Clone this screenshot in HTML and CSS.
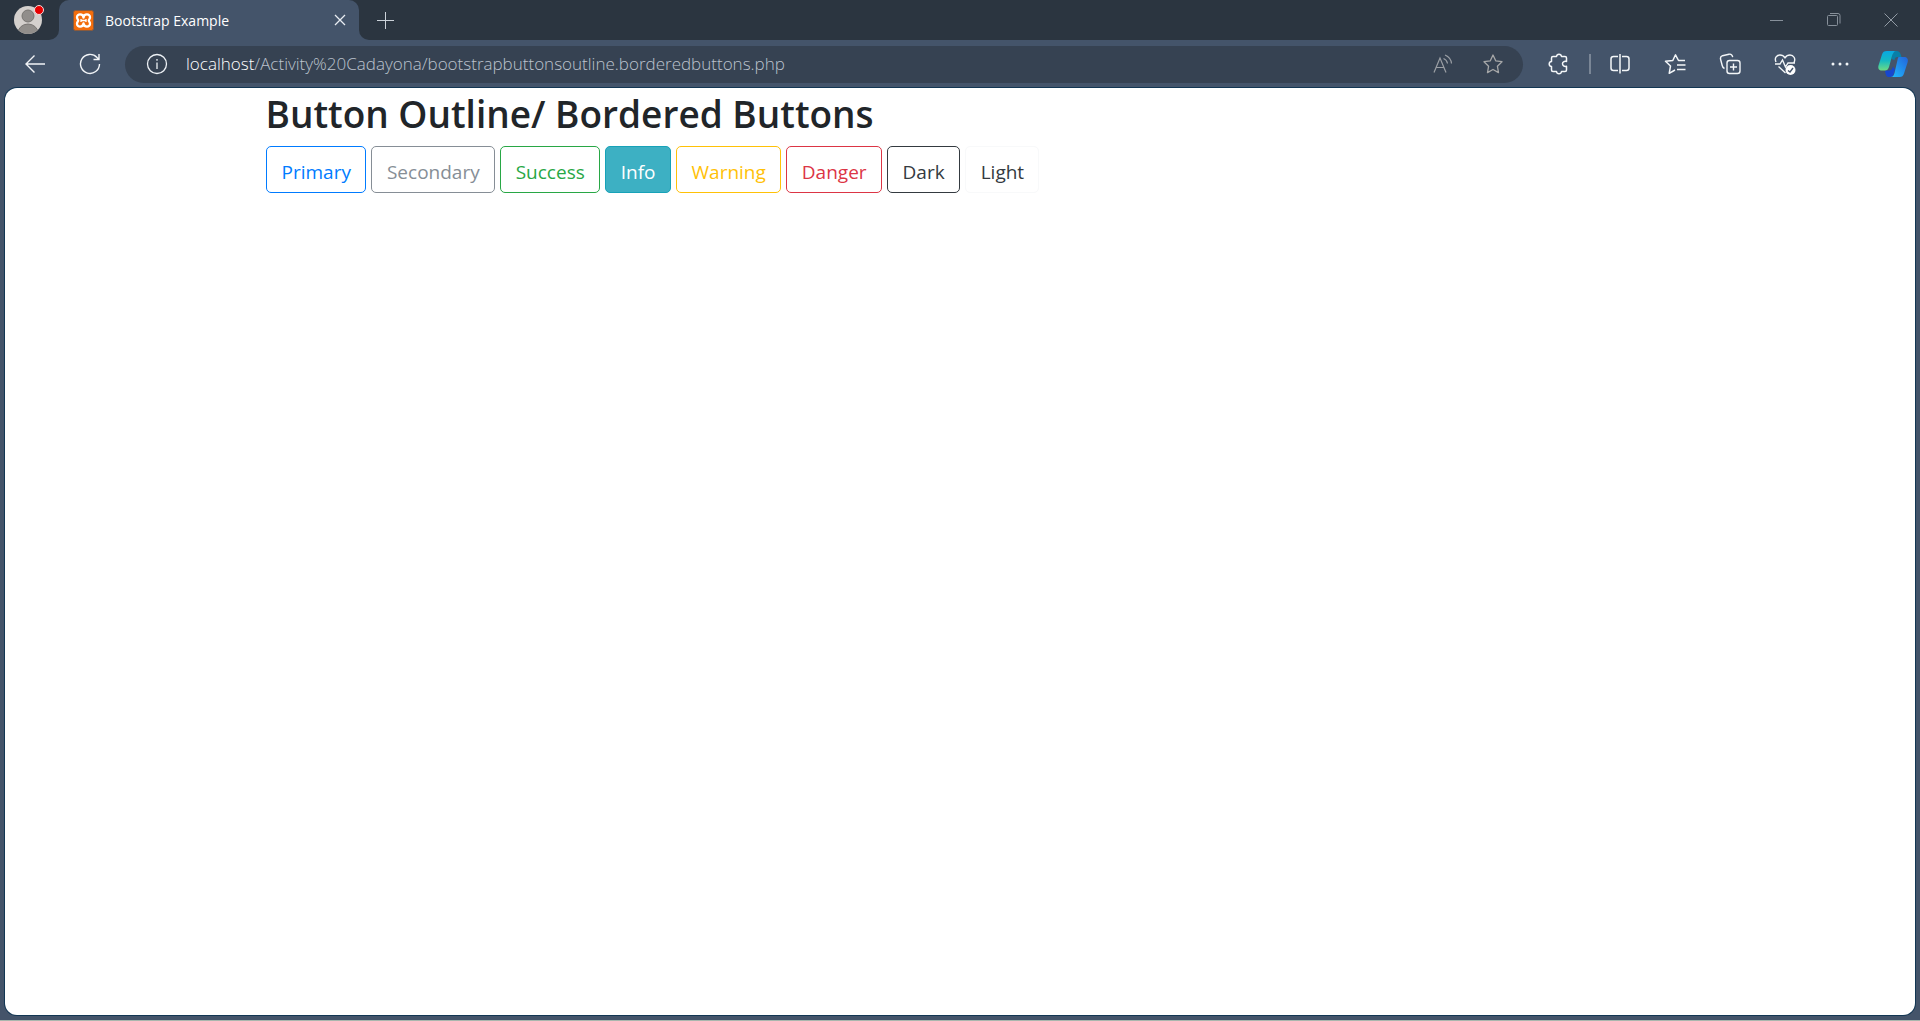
FILE: index.html
```html
<!DOCTYPE html>
<html lang="en">
<head>
<meta charset="utf-8">
<title>Bootstrap Example</title>
<link rel="stylesheet" href="styles.css">
</head>
<body>
<div class="browser">
  <header class="tabs">
    <button class="profile" aria-label="Profile">
      <svg width="32" height="32" viewBox="0 0 32 32"><defs><clipPath id="face"><circle cx="16" cy="18" r="14"/></clipPath></defs><circle cx="16" cy="18" r="14" fill="#d4d0cd"/><g clip-path="url(#face)" fill="#918e8b" stroke="#777471"><circle cx="16" cy="14" r="6"/><ellipse cx="16" cy="31" rx="10" ry="9"/></g><circle cx="27" cy="8" r="4.5" fill="#e60000" stroke="#f5dddd"/></svg>
    </button>
    <div class="tab">
      <svg class="favicon" width="21" height="21" viewBox="0 0 21 21"><rect x=".5" y=".5" width="20" height="20" rx="2" fill="#f36d0c" stroke="#8a5a3c"/><path d="M10.500 7.500C10 3.500 4 3.500 4 7.300c0 1.700 1.200 2.200 1.200 3.200S4 12 4 13.700c0 3.800 6 3.800 6.500-.2.500 4 6.500 4 6.500.2 0-1.700-1.200-2.200-1.200-3.200S17 9 17 7.300c0-3.800-6-3.800-6.500.2z" fill="none" stroke="#fff" stroke-width="2.300" stroke-linejoin="round"/><path d="M8 9v3M13 9v3M8 10.500h5" stroke="#fff" stroke-width="1.300"/></svg>
      <span class="tab-title">Bootstrap Example</span>
      <button class="tab-close" aria-label="Close tab"><svg width="12" height="12" viewBox="0 0 12 12"><path d="M1 1l10 10M11 1L1 11" stroke="#e8edf2" stroke-width="1.300"/></svg></button>
    </div>
    <div class="strip">
      <button aria-label="New tab"><svg width="18" height="18" viewBox="0 0 18 18"><path d="M9.500 1v17M1 9.500h17" stroke="#cbd2d9"/></svg></button>
      <div class="window-controls">
        <button aria-label="Minimize"><svg width="14" height="14" viewBox="0 0 14 14"><path d="M0 7.500h13" stroke="#87909a"/></svg></button>
        <button aria-label="Restore"><svg width="14" height="14" viewBox="0 0 14 14" fill="none" stroke="#87909a"><rect x=".5" y="2.500" width="10" height="10" rx="1"/><path d="M3 .5h8a2 2 0 0 1 2 2v8"/></svg></button>
        <button aria-label="Close"><svg width="14" height="14" viewBox="0 0 14 14"><path d="M.5.5l13 13M13.500.5l-13 13" stroke="#929ba5"/></svg></button>
      </div>
    </div>
  </header>
  <nav class="toolbar">
    <button class="back" aria-label="Back"><svg width="22" height="20" viewBox="0 0 22 20" fill="none" stroke="#f1f4f7" stroke-width="1.400"><path d="M10.500 1.500L2 10l8.500 8.500M2 10h19"/></svg></button>
    <button class="reload" aria-label="Refresh"><svg width="22" height="22" viewBox="0 0 22 22" fill="none" stroke="#f1f4f7" stroke-width="1.400"><path d="M20.500 11A9.500 9.500 0 1 1 18 4.500L20 6.500M20 1v5.500h-5.500"/></svg></button>
    <div class="address">
      <svg width="22" height="22" viewBox="0 0 22 22" fill="none" stroke="#edf1f5" stroke-width="1.300"><circle cx="11" cy="11" r="9.500"/><path d="M11 9.500V16M11 6v1.700"/></svg>
      <div class="url" role="textbox" aria-label="Address"><b>localhost</b>/Activity%20Cadayona/bootstrapbuttonsoutline.borderedbuttons.php</div>
      <button aria-label="Read aloud"><svg width="22" height="20" viewBox="0 0 22 20" fill="none" stroke="#9b9fa5" stroke-width="1.200"><path d="M2 18.500L8 4l6 14.500M4 13.500h8M11.500 4.500q3.500 1.500 4 5M13 1q6 2.500 6.500 8.500"/></svg></button>
      <button aria-label="Add to favorites"><svg width="22" height="22" viewBox="0 0 22 22" fill="none" stroke="#a6a7a8" stroke-width="1.300" stroke-linejoin="round"><path d="M11 2l2.700 5.800 6.300.9-4.600 4.500 1.100 6.400L11 16.500l-5.500 3.100 1.100-6.400L2 8.700l6.300-.9z"/></svg></button>
    </div>
    <div class="tools">
      <button aria-label="Extensions"><svg width="22" height="22" viewBox="0 0 22 22" fill="none" stroke="#f3f6f8" stroke-width="1.500" stroke-linejoin="round"><path d="M5 3.500h3.500C8.700 1.800 9.500 1.200 11 1.200s2.300.6 2.500 2.300H17q1.500 0 1.500 1.500v3.500c-2.500-.5-4 .5-4 2.300s1.500 3 4 2.500V17q0 1.500-1.500 1.500h-3.500c-.2 1.700-1 2.300-2.500 2.300s-2.300-.6-2.500-2.300H5q-1.500 0-1.500-1.500v-3.500C1.800 13.300 1.200 12.500 1.200 11s.6-2.300 2.300-2.500V5q0-1.500 1.500-1.500z"/></svg></button>
      <span class="divider"></span>
      <button aria-label="Split screen"><svg width="22" height="22" viewBox="0 0 22 22" fill="none" stroke="#f3f6f8" stroke-width="1.500"><path d="M9 3.500H4.500a2.500 2.500 0 0 0-2.500 2.500v9a2.500 2.500 0 0 0 2.500 2.500H9M13 3.500h4.500A2.500 2.500 0 0 1 20 6v9a2.500 2.500 0 0 1-2.500 2.500H13M11 1v19.500"/></svg></button>
      <button aria-label="Favorites"><svg width="22" height="22" viewBox="0 0 22 22" fill="none" stroke="#f3f6f8" stroke-width="1.500" stroke-linejoin="round"><path d="M21 7.500h-6.500L11.500 1.800 8.800 7.500 1.500 8.300l5 4.700-1.300 7.300 5.800-3.300M13 12h8.500M13 16.500h8.500"/></svg></button>
      <button aria-label="Collections"><svg width="22" height="22" viewBox="0 0 22 22" fill="none" stroke="#f3f6f8" stroke-width="1.400"><rect x="8" y="7.500" width="13" height="13" rx="2.500"/><path d="M14.500 10.500v7M11 14h7M5.500 15.500C4 15 3.500 14 3.200 12.500L1.500 6A3 3 0 0 1 3.500 2.700L10 1.200c2-.4 3.200.5 3.700 3"/></svg></button>
      <button aria-label="Browser essentials"><svg width="22" height="22" viewBox="0 0 22 22" fill="none" stroke="#f3f6f8" stroke-width="1.400"><path d="M2 9C0 4.500 3 2 6 2c2.500 0 4 1.300 5 2.800C12 3.300 13.500 2 16 2c3.500 0 6 3.500 4 7.500M1 11h5l2.500-4 3 7 2.500-4h7M4.500 13.500l7 6.500"/><circle cx="16.500" cy="17" r="5" fill="#fff" stroke="none"/><path d="M14 17.500l2 1.500 3-4" stroke="#44546a"/></svg></button>
      <button aria-label="Settings and more"><svg width="22" height="22" viewBox="0 0 22 22" fill="#f3f6f8"><circle cx="4" cy="11" r="1.500"/><circle cx="11" cy="11" r="1.500"/><circle cx="18" cy="11" r="1.500"/></svg></button>
      <button class="copilot" aria-label="Copilot"><svg width="32" height="28" viewBox="0 0 32 28"><defs><linearGradient id="green" x1="0" y1="0" x2="0" y2="1"><stop stop-color="#08a8e2"/><stop offset=".5" stop-color="#16b9c2"/><stop offset="1" stop-color="#6edc83"/></linearGradient><linearGradient id="blue" x1="1" y1="0" x2="0" y2="1"><stop stop-color="#2363da"/><stop offset="1" stop-color="#20bdff"/></linearGradient></defs><path d="M16 1h4c2.500 0 3.500 2 4.500 6h-4c-2 0-2.500 1-3 3l-3-1z" fill="#087fa8"/><path d="M8 20.500h4c2 0 3-1 4-4l2 3-1.500 5c-.5 1.500-1.500 2.500-3 2.500h-2c-2.500 0-3-3-3.500-6.500z" fill="#1747cf"/><path d="M10 1h9c-2 0-3 2-4 5l-3 11c-.8 2.500-2 3.500-4 3.500H5C2 20.500.7 18.500 1.500 15.500L5 4.500C5.800 2 7 1 10 1z" fill="url(#green)"/><path d="M22 7h5c3 0 4.500 2 3.700 5L27 23.500c-.7 2.500-2 3.500-4.500 3.500h-9c2 0 3-1 4-4l3-13c.5-2 .5-3 1.500-3z" fill="url(#blue)"/></svg></button>
    </div>
  </nav>
  <main class="page">
    <div class="container">
      <h1>Button Outline/ Bordered Buttons</h1>
      <div class="buttons">
        <button class="btn primary">Primary</button>
        <button class="btn secondary">Secondary</button>
        <button class="btn success">Success</button>
        <button class="btn info">Info</button>
        <button class="btn warning">Warning</button>
        <button class="btn danger">Danger</button>
        <button class="btn dark">Dark</button>
        <button class="btn light">Light</button>
      </div>
    </div>
  </main>
</div>
</body>
</html>
```
FILE: styles.css
```css
* { box-sizing: border-box; }
body { margin: 0; font-family: "Open Sans", "Noto Sans", sans-serif; }
button { margin: 0; padding: 0; border: 0; background: none; font: inherit; color: inherit; }
svg { display: block; flex: none; }

.browser { display: flex; flex-direction: column; min-height: 100vh; background: #44546a; border-bottom: 1px solid #a9b7ae; }

.tabs { display: flex; height: 40px; background: #44546a; }
.profile { display: flex; width: 59px; padding: 2px 0 0 12px; background: #2b3540; border-bottom-right-radius: 10px; }
.tab { display: flex; align-items: center; width: 300px; padding: 0 13px 0 14px; background: #44546a; border-radius: 10px 10px 0 0; box-shadow: 0 -10px #2b3540; }
.tab-title { flex: 1; margin-left: 11px; font-size: 14px; color: #fff; white-space: nowrap; }
.strip { display: flex; flex: 1; align-items: center; justify-content: space-between; padding: 0 22px 0 17px; background: #2b3540; border-bottom-left-radius: 10px; }
.window-controls { display: flex; gap: 43px; }

.toolbar { display: flex; align-items: center; height: 48px; padding: 0 11px 0 24px; }
.reload { margin-left: 33px; }
.address { display: flex; flex: 1; align-items: center; gap: 28px; height: 37px; margin-left: 24px; padding: 0 19px 0 21px; background: #364252; border-radius: 19px; }
.url { flex: 1; margin-left: -10px; padding-bottom: 2px; font-size: 17px; font-weight: 300; color: #bcc3ce; white-space: nowrap; }
.url b { font-weight: 300; color: #fff; }
.tools { display: flex; align-items: center; gap: 33px; margin-left: 25px; }
.divider { width: 2px; height: 20px; margin: 0 -15px 0 -14px; background: #7a8696; }
.copilot { margin-left: -7px; }

.page { flex: 1; margin: 0 5px 5px; background: #fff; border-radius: 12px; box-shadow: 0 0 0 1px #123653; }
.container { max-width: 1425px; margin: 0 auto; padding: 0 18px; }
h1 { margin: 0 0 8px; padding-top: 2px; font-size: 37px; line-height: 48px; font-weight: 600; color: #212529; }
.buttons { display: flex; flex-wrap: wrap; gap: 5px; }
.btn { height: 47px; padding: 4px 14px 0 15px; border: 1px solid; border-radius: 5px; font-size: 19px; line-height: 30px; }
.primary { color: #007bff; }
.secondary { color: #868e96; }
.success { color: #28a745; }
.info { color: #fff; background: #3db0c3; border-color: #17a2b8; }
.warning { color: #ffc107; }
.danger { color: #dc3545; }
.dark { color: #343a40; }
.light { color: #343a40; border-color: #f8f9fa; }
```
